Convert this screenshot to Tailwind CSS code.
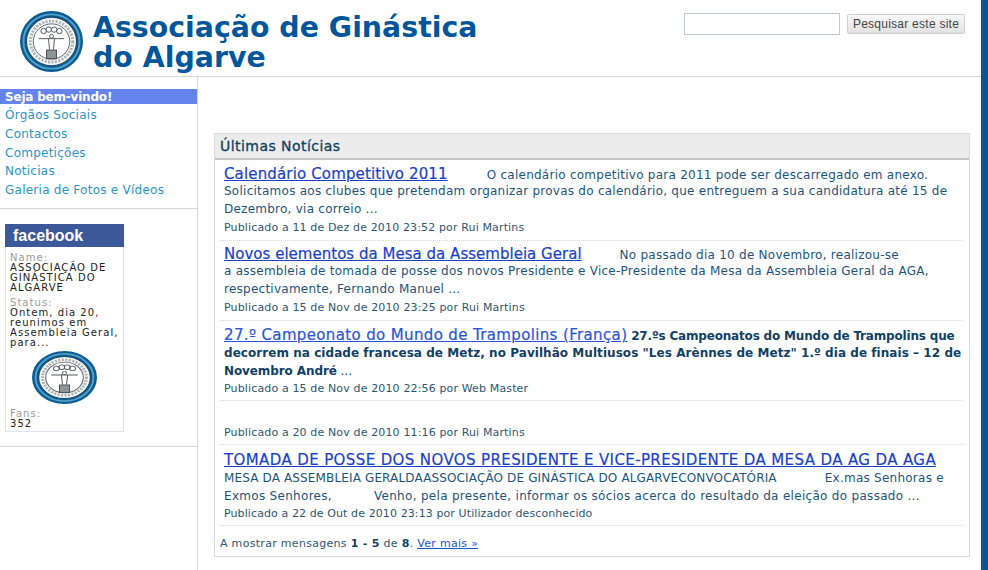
<!DOCTYPE html>
<html lang="pt">
<head>
    <meta charset="UTF-8">
    <title>Associação de Ginástica do Algarve</title>
    <script src="https://cdn.jsdelivr.net/npm/@tailwindcss/browser@4"></script>
</head>
<body class="bg-white overflow-hidden font-['DejaVu_Sans',sans-serif]">

<svg width="0" height="0" class="absolute">
    <symbol id="logo" viewBox="0 0 64 64" preserveAspectRatio="none">
        <circle cx="32" cy="32" r="32" fill="#0c5a92"/>
        <circle cx="32" cy="32" r="28.5" fill="none" stroke="#4f9fc6" stroke-width="2"/>
        <circle cx="32" cy="32" r="25.5" fill="#f2f5f3" stroke="#1d4a6c" stroke-width="1.2"/>
        <circle cx="32" cy="32" r="21.5" fill="none" stroke="#a9b1b3" stroke-width="3" stroke-dasharray="2 1.5"/>
        <circle cx="32" cy="32" r="18.5" fill="#fff" stroke="#63686c" stroke-width="1"/>
        <g fill="none" stroke="#55585a" stroke-width="1">
            <circle cx="24" cy="21" r="2.8"/><circle cx="29.3" cy="19.5" r="2.8"/><circle cx="34.7" cy="19.5" r="2.8"/><circle cx="40" cy="21" r="2.8"/>
            <path d="M19 29h26M29 29.5l1 11M35 29.5l-1 11"/>
            <circle cx="32" cy="26.5" r="2"/>
        </g>
        <rect x="27" y="41" width="10" height="9" fill="#8d9498" stroke="#45494c" stroke-width="1"/>
    </symbol>
</svg>

<div class="flex h-[570px] w-[988px]">
    <div class="w-[981px] shrink-0">
        <!-- Header -->
        <header class="flex h-[77px] border-b border-[#d5d7d9]">
            <svg class="w-[63px] h-[61px] mt-[11px] ml-[20px] blur-[0.4px]"><use href="#logo" width="100%" height="100%"/></svg>
            <h1 class="ml-[10px] mt-[13px] w-[420px] text-[28.4px] leading-[30px] font-bold text-[#00569a]">Associação de Ginástica do Algarve</h1>
            <form class="flex items-start ml-auto mt-[13px] mr-[16px] gap-[7px]">
                <input type="text" class="w-[156px] h-[22px] bg-white border border-[#c2c8ce]">
                <button type="button" class="w-[118px] h-[20px] mt-[1px] rounded-[2px] border border-[#cfcfcf] bg-gradient-to-b from-[#f8f8f8] to-[#e2e2e2] text-[12px] tracking-[0.25px] text-[#444] font-['Liberation_Sans',sans-serif]">Pesquisar este site</button>
            </form>
        </header>

        <div class="flex h-[493px]">
            <!-- Sidebar -->
            <aside class="w-[198px] shrink-0 border-r border-[#d5d7d9] pt-[12px]">
                <nav class="flex flex-col text-[12px] leading-[18.8px] tracking-[0.25px] text-[#2a94c8] pb-[8px] border-b border-[#d5d7d9]">
                    <a class="bg-[#6484ec] text-white font-bold tracking-[-0.2px] pl-[5px] h-[15px] leading-[16px] mb-[2px]">Seja bem-vindo!</a>
                    <a class="pl-[5px]">Órgãos Sociais</a>
                    <a class="pl-[5px]">Contactos</a>
                    <a class="pl-[5px]">Competições</a>
                    <a class="pl-[5px]">Noticias</a>
                    <a class="pl-[5px]">Galeria de Fotos e Vídeos</a>
                </nav>
                <div class="h-[238px] pt-[15px] pl-[5px] border-b border-[#d5d7d9]">
                    <div class="w-[119px] h-[208px] border border-t-0 border-[#dde4f0]">
                        <div class="h-[23px] -mx-px bg-[#3b5998] text-white font-['Liberation_Sans',sans-serif] font-bold text-[16px] leading-[23px] pl-[8px]">facebook</div>
                        <div class="pl-[4px] pt-[6px] text-[10px] leading-[10px] tracking-[1.05px] text-[#222]">
                            <p class="text-[#999]">Name:</p>
                            <p>ASSOCIAÇÃO DE GINÁSTICA DO ALGARVE</p>
                            <p class="text-[#999] mt-[5px]">Status:</p>
                            <p>Ontem, dia 20, reunimos em Assembleia Geral, para...</p>
                            <svg class="w-[65px] h-[53px] ml-[22px] mt-[3px] blur-[0.4px]"><use href="#logo" width="100%" height="100%"/></svg>
                            <p class="text-[#999] mt-[5px]">Fans:</p>
                            <p>352</p>
                        </div>
                    </div>
                </div>
            </aside>

            <!-- Main -->
            <main class="pl-[16px] pt-[56px]">
                <section class="w-[756px] h-[424px] border border-[#d9dbdc]">
                    <h2 class="h-[26px] bg-[#ececec] border-b-2 border-[#c4c6c8] pl-[5px] text-[14px] tracking-[0.45px] leading-[25px] text-[#0e3f63] [-webkit-text-stroke:0.3px]">Últimas Notícias</h2>

                    <article class="mx-[5px] pl-[4px] h-[81px] pt-[4px] border-b border-dotted border-[#d8d8d8] text-[12px] leading-[18px] tracking-[0.25px] text-[#1c5480]">
                        <div class="h-[18px] leading-[20px] whitespace-nowrap"><a class="text-[15px] tracking-[0.15px] underline text-[#1a3fcc] mr-[39px] [-webkit-text-stroke:0.2px]">Calendário Competitivo 2011</a>O calendário competitivo para 2011 pode ser descarregado em anexo.</div>
                        <p>Solicitamos aos clubes que pretendam organizar provas do calendário, que entreguem a sua candidatura até 15 de Dezembro, via correio ...</p>
                        <p class="mt-[1px] text-[11px] leading-[17px] tracking-[0.14px] text-[#2c5675]">Publicado a 11 de Dez de 2010 23:52 por Rui Martins</p>
                    </article>

                    <article class="mx-[5px] pl-[4px] h-[80px] pt-[3px] border-b border-dotted border-[#d8d8d8] text-[12px] leading-[18px] tracking-[0.25px] text-[#1c5480]">
                        <div class="h-[18px] leading-[20px] whitespace-nowrap"><a class="text-[15px] tracking-[0.02px] underline text-[#1a3fcc] mr-[38px] [-webkit-text-stroke:0.2px]">Novos elementos da Mesa da Assembleia Geral</a>No passado dia 10 de Novembro, realizou-se</div>
                        <p>a assembleia de tomada de posse dos novos Presidente e Vice-Presidente da Mesa da Assembleia Geral da AGA, respectivamente, Fernando Manuel ...</p>
                        <p class="mt-[1px] text-[11px] leading-[17px] tracking-[0.14px] text-[#2c5675]">Publicado a 15 de Nov de 2010 23:25 por Rui Martins</p>
                    </article>

                    <article class="mx-[5px] pl-[4px] h-[80px] pt-[4px] border-b border-dotted border-[#d8d8d8] text-[12px] leading-[18px] text-[#123f66]">
                        <div class="h-[19px] leading-[20px] whitespace-nowrap"><a class="text-[15px] tracking-[0.36px] underline text-[#2a55d8] [-webkit-text-stroke:0.2px]">27.º Campeonato do Mundo de Trampolins (França)</a> <b class="tracking-[-0.18px]">27.ºs Campeonatos do Mundo de Trampolins que</b></div>
                        <div class="whitespace-nowrap"><b class="tracking-[0.05px]">decorrem na cidade francesa de Metz, no Pavilhão Multiusos "Les Arènnes de Metz" 1.º dia de finais – 12 de</b></div>
                        <div class="whitespace-nowrap"><b class="tracking-[-0.1px]">Novembro André</b> ...</div>
                        <p class="text-[11px] leading-[17px] tracking-[0.14px] text-[#2c5675]">Publicado a 15 de Nov de 2010 22:56 por Web Master</p>
                    </article>

                    <article class="mx-[5px] pl-[4px] h-[44px] pt-[23px] border-b border-dotted border-[#d8d8d8]">
                        <p class="text-[11px] leading-[17px] tracking-[0.14px] text-[#2c5675]">Publicado a 20 de Nov de 2010 11:16 por Rui Martins</p>
                    </article>

                    <article class="mx-[5px] pl-[4px] h-[81px] pt-[5px] border-b border-dotted border-[#d8d8d8] text-[12px] leading-[18px] text-[#1c5480]">
                        <div class="h-[19px] leading-[20px] whitespace-nowrap"><a class="text-[15px] tracking-[0.39px] underline text-[#1a3fcc] [-webkit-text-stroke:0.2px]">TOMADA DE POSSE DOS NOVOS PRESIDENTE E VICE-PRESIDENTE DA MESA DA AG DA AGA</a></div>
                        <div class="whitespace-nowrap tracking-[0.14px]">MESA DA ASSEMBLEIA GERALDAASSOCIAÇÃO DE GINÁSTICA DO ALGARVECONVOCATÓRIA<span class="ml-[48px] tracking-[0.25px]">Ex.mas Senhoras e</span></div>
                        <div class="whitespace-nowrap tracking-[0.3px]">Exmos Senhores,<span class="ml-[42px]">Venho, pela presente, informar os sócios acerca do resultado da eleição do passado ...</span></div>
                        <p class="text-[11px] leading-[17px] tracking-[0.1px] text-[#2c5675]">Publicado a 22 de Out de 2010 23:13 por Utilizador desconhecido</p>
                    </article>

                    <p class="pl-[5px] pt-[9px] text-[11px] leading-[17px] tracking-[0.3px] text-[#2c5675]">A mostrar mensagens <b class="text-[#123f66]">1 - 5</b> de <b class="text-[#123f66]">8</b>. <a class="underline text-[#1a55cc]">Ver mais »</a></p>
                </section>
            </main>
        </div>
    </div>
    <div class="flex-1 bg-[#00569a]"></div>
</div>
</body>
</html>
